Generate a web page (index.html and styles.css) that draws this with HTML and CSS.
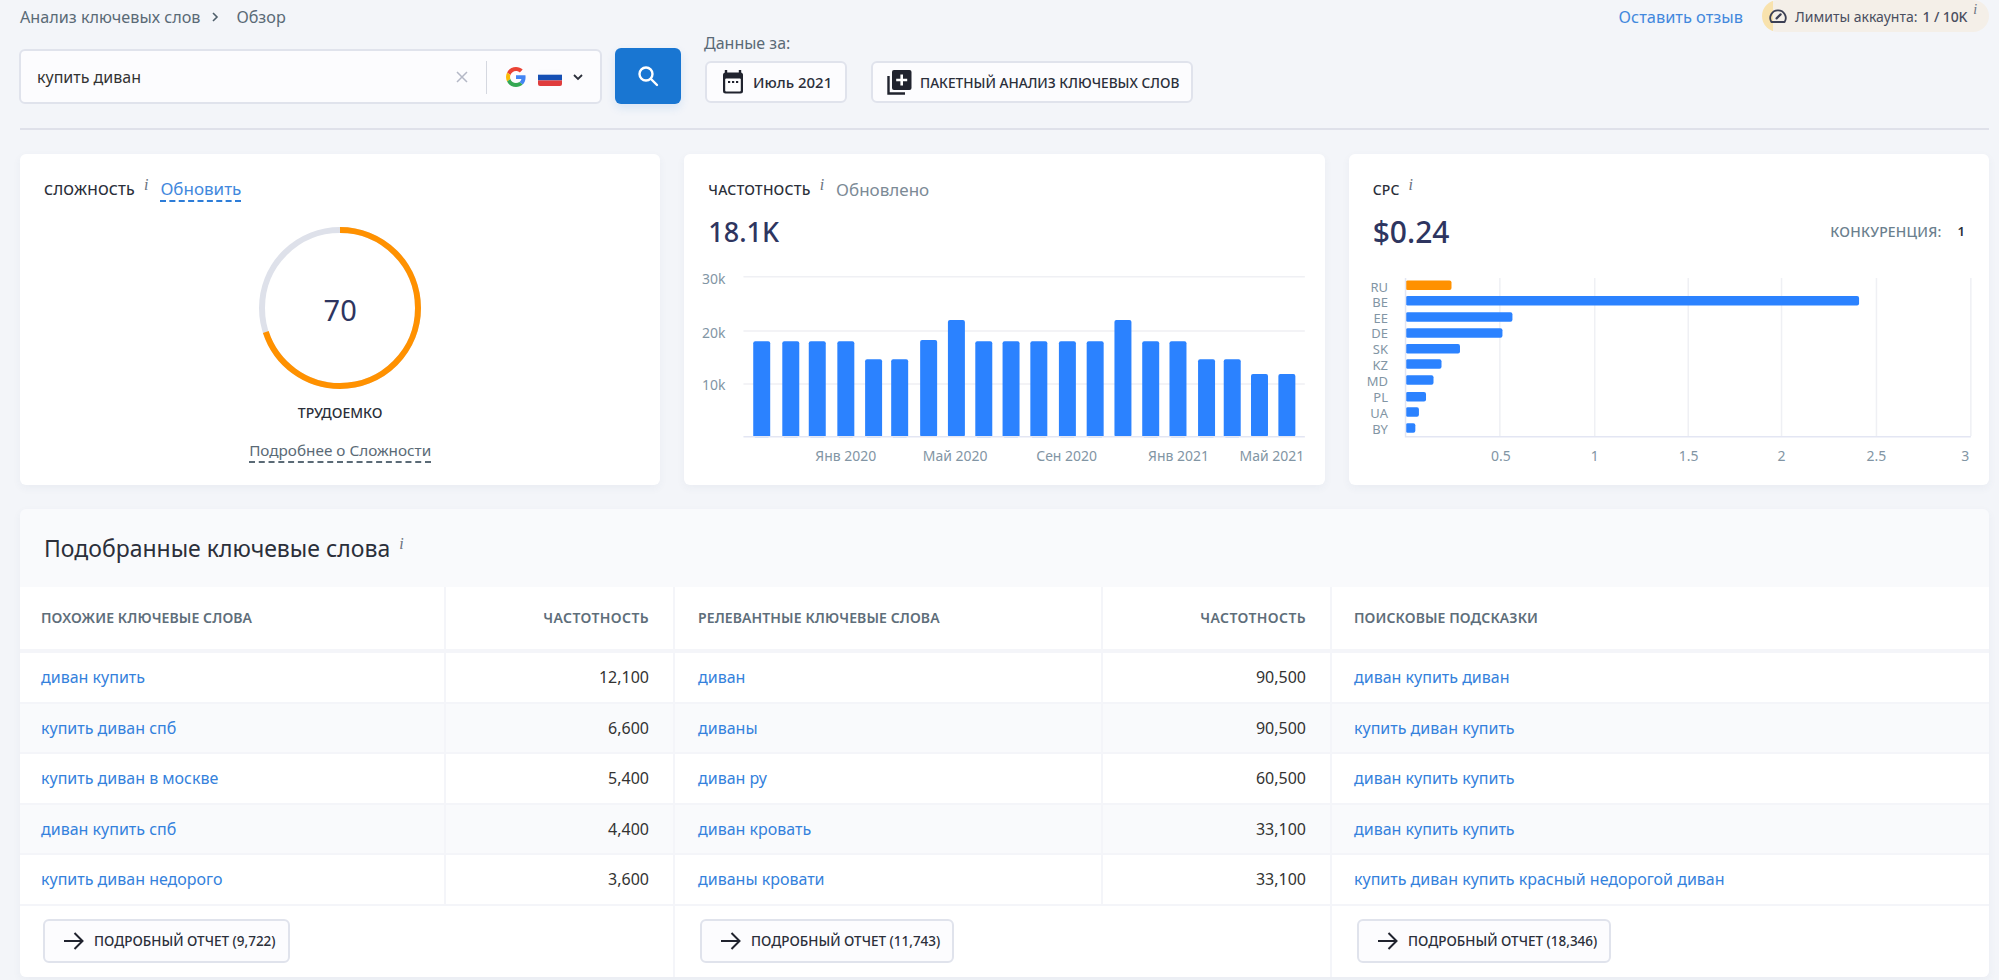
FILE: index.html
```html
<!DOCTYPE html>
<html lang="ru">
<head>
<meta charset="utf-8">
<title>Анализ ключевых слов</title>
<link rel="stylesheet" href="styles.css">
</head>
<body>
<header class="topbar">
  <nav class="crumbs">
    <span>Анализ ключевых слов</span>
    <svg class="crumb-sep" width="8" height="12" viewBox="0 0 8 12"><path d="M2 2l4 4-4 4" fill="none" stroke="#4f5f6b" stroke-width="1.6"/></svg>
    <span>Обзор</span>
  </nav>
  <div class="top-right">
    <a class="feedback">Оставить отзыв</a>
    <div class="limits">
      <svg width="18" height="16" viewBox="0 0 18 16"><path d="M2.4 14A7.6 7.6 0 0 1 9 2.4 7.6 7.6 0 0 1 15.600 14z" fill="none" stroke="#3c4054" stroke-width="1.800" stroke-linejoin="round"/><path d="M7.600 10.400l4-4" stroke="#3c4054" stroke-width="2.200" stroke-linecap="round"/></svg>
      <span class="limits-label">Лимиты аккаунта:</span>
      <span class="limits-value">1 / 10K</span>
      <i class="info">i</i>
    </div>
  </div>
</header>

<section class="toolbar">
  <div class="searchbox">
    <span class="query">купить диван</span>
    <svg class="clear" width="14" height="14" viewBox="0 0 14 14"><path d="M2 2l10 10M12 2L2 12" stroke="#b4b8c6" stroke-width="1.500"/></svg>
    <span class="vsep"></span>
    <svg class="g-logo" width="20" height="20" viewBox="0 0 48 48"><path fill="#EA4335" d="M24 9.500c3.540 0 6.710 1.220 9.210 3.600l6.850-6.850C35.900 2.380 30.470 0 24 0 14.620 0 6.510 5.380 2.560 13.220l7.980 6.190C12.430 13.720 17.740 9.500 24 9.500z"/><path fill="#4285F4" d="M46.980 24.550c0-1.570-.15-3.090-.38-4.550H24v9.020h12.940c-.58 2.960-2.260 5.480-4.780 7.180l7.730 6c4.510-4.180 7.090-10.360 7.090-17.650z"/><path fill="#FBBC05" d="M10.530 28.590c-.48-1.450-.76-2.990-.76-4.590s.27-3.140.76-4.590l-7.980-6.190C.92 16.460 0 20.120 0 24c0 3.880.92 7.540 2.560 10.780l7.970-6.190z"/><path fill="#34A853" d="M24 48c6.480 0 11.930-2.130 15.890-5.810l-7.730-6c-2.150 1.450-4.920 2.300-8.160 2.300-6.260 0-11.570-4.220-13.470-9.910l-7.980 6.190C6.510 42.620 14.620 48 24 48z"/></svg>
    <svg class="flag" width="24" height="17" viewBox="0 0 24 17"><defs><clipPath id="fc"><rect width="24" height="17" rx="2"/></clipPath></defs><g clip-path="url(#fc)"><rect width="24" height="5.700" fill="#fbfbfd"/><rect y="5.700" width="24" height="5.700" fill="#1650b4"/><rect y="11.400" width="24" height="5.600" fill="#e03c3c"/></g></svg>
    <svg class="chev" width="12" height="8" viewBox="0 0 12 8"><path d="M2 2l4 4 4-4" fill="none" stroke="#2b2f3a" stroke-width="1.800"/></svg>
  </div>
  <button class="search-btn" aria-label="Поиск">
    <svg width="26" height="26" viewBox="0 0 26 26"><circle cx="11" cy="11" r="6.500" fill="none" stroke="#fff" stroke-width="2.400"/><path d="M16 16l6 6" stroke="#fff" stroke-width="2.400" stroke-linecap="round"/></svg>
  </button>
  <div class="date-col">
    <span class="date-label">Данные за:</span>
    <button class="btn btn-date">
      <svg width="24" height="26" viewBox="0 0 24 26"><path d="M5 1v4M19 1v4" stroke="#20232e" stroke-width="2.400"/><rect x="2" y="3.500" width="20" height="21" rx="2.500" fill="#20232e"/><rect x="4.200" y="9.500" width="15.600" height="13" rx="1" fill="#fff"/><path d="M7 13h2.200M11 13h2.200M15 13h2.200" stroke="#20232e" stroke-width="2"/></svg>
      <span>Июль 2021</span>
    </button>
  </div>
  <button class="btn btn-batch">
    <svg width="25" height="26" viewBox="0 0 25 26"><path d="M1.500 7v17.500H18" fill="none" stroke="#20232e" stroke-width="2.400"/><rect x="5" y="1" width="19.500" height="20" rx="2" fill="#20232e"/><path d="M14.700 5.500v11M9.200 11h11" stroke="#fff" stroke-width="2.600"/></svg>
    <span>ПАКЕТНЫЙ АНАЛИЗ КЛЮЧЕВЫХ СЛОВ</span>
  </button>
</section>

<hr class="divider">

<section class="cards">
  <article class="card card-center">
    <div class="card-head">
      <h3 class="card-title">СЛОЖНОСТЬ</h3><i class="info">i</i>
      <a class="refresh">Обновить</a>
    </div>
    <div class="ring">
      <svg width="162" height="162" viewBox="0 0 162 162">
        <circle cx="81" cy="81" r="78" fill="none" stroke="#dee1ea" stroke-width="6"/>
        <circle cx="81" cy="81" r="78" fill="none" stroke="#ff9100" stroke-width="6" pathLength="100" stroke-dasharray="70 30" transform="rotate(-90 81 81)"/>
      </svg>
      <span class="ring-value">70</span>
    </div>
    <div class="ring-caption">ТРУДОЕМКО</div>
    <a class="more">Подробнее о Сложности</a>
  </article>

  <article class="card">
    <div class="card-head">
      <h3 class="card-title">ЧАСТОТНОСТЬ</h3><i class="info">i</i>
      <span class="updated">Обновлено</span>
    </div>
    <div class="value-row"><span class="big-value volume">18.1K</span></div>
    <svg class="chart" viewBox="0 0 641 200">
      <g class="grid-line">
        <path d="M59.500 8.700H621.500M59.500 63H621.500M59.500 116H621.500"/>
      </g>
      <g class="bar-blue">
        <rect x="69.300" y="73.300" width="17" height="96" rx="2"/>
        <rect x="98.400" y="73.300" width="17" height="96" rx="2"/>
        <rect x="124.900" y="73.300" width="17" height="96" rx="2"/>
        <rect x="153.500" y="73.300" width="17" height="96" rx="2"/>
        <rect x="181.300" y="91.300" width="17" height="78" rx="2"/>
        <rect x="207.400" y="91.300" width="17" height="78" rx="2"/>
        <rect x="236.400" y="72" width="17" height="97" rx="2"/>
        <rect x="264.200" y="52" width="17" height="117" rx="2"/>
        <rect x="291.600" y="73.300" width="17" height="96" rx="2"/>
        <rect x="318.900" y="73.300" width="17" height="96" rx="2"/>
        <rect x="346.700" y="73.300" width="17" height="96" rx="2"/>
        <rect x="375.300" y="73.300" width="17" height="96" rx="2"/>
        <rect x="403.100" y="73.300" width="17" height="96" rx="2"/>
        <rect x="430.900" y="52" width="17" height="117" rx="2"/>
        <rect x="458.700" y="73.300" width="17" height="96" rx="2"/>
        <rect x="486" y="73.300" width="17" height="96" rx="2"/>
        <rect x="514.600" y="91.300" width="17" height="78" rx="2"/>
        <rect x="540.300" y="91.300" width="17" height="78" rx="2"/>
        <rect x="567.600" y="106" width="17" height="63" rx="2"/>
        <rect x="595" y="106" width="17" height="63" rx="2"/>
      </g>
      <path class="axis" d="M59.500 168.700H621.500"/>
      <g class="tick tick-end">
        <text x="41.600" y="16">30k</text>
        <text x="41.600" y="70">20k</text>
        <text x="41.600" y="122">10k</text>
      </g>
      <g class="tick tick-mid">
        <text x="162" y="193">Янв 2020</text>
        <text x="271.500" y="193">Май 2020</text>
        <text x="383" y="193">Сен 2020</text>
        <text x="495" y="193">Янв 2021</text>
        <text x="588.500" y="193">Май 2021</text>
      </g>
    </svg>
  </article>

  <article class="card">
    <div class="card-head">
      <h3 class="card-title">CPC</h3><i class="info">i</i>
    </div>
    <div class="value-row">
      <span class="big-value price">$0.24</span>
      <span class="competition"><span class="comp-label">КОНКУРЕНЦИЯ:</span><b class="comp-value">1</b></span>
    </div>
    <svg class="chart" viewBox="0 0 641 200">
      <g class="grid-line">
        <path d="M151 10V168M246 10V168M339.600 10V168M433 10V168M528 10V168M622.500 10V168"/>
      </g>
      <rect class="bar-orange" x="56.600" y="12.300" width="46" height="9.500" rx="2"/>
      <g class="bar-blue">
        <rect x="56.600" y="28" width="454" height="9.500" rx="2"/>
        <rect x="56.600" y="44.300" width="107" height="9.500" rx="2"/>
        <rect x="56.600" y="60.300" width="97" height="9.500" rx="2"/>
        <rect x="56.600" y="76" width="54.500" height="9.500" rx="2"/>
        <rect x="56.600" y="91.300" width="36" height="9.500" rx="2"/>
        <rect x="56.600" y="107.300" width="28" height="9.500" rx="2"/>
        <rect x="56.600" y="124" width="20.500" height="9.500" rx="2"/>
        <rect x="56.600" y="139.300" width="13.400" height="9.500" rx="2"/>
        <rect x="56.600" y="155.300" width="9.800" height="9.500" rx="2"/>
      </g>
      <path class="axis" d="M56.600 10V168.700H622.500"/>
      <g class="tick tick-end tick-small">
        <text x="39" y="23.500">RU</text>
        <text x="39" y="38.500">BE</text>
        <text x="39" y="54.500">EE</text>
        <text x="39" y="70">DE</text>
        <text x="39" y="86">SK</text>
        <text x="39" y="102.500">KZ</text>
        <text x="39" y="118">MD</text>
        <text x="39" y="134">PL</text>
        <text x="39" y="150">UA</text>
        <text x="39" y="166">BY</text>
      </g>
      <g class="tick tick-mid">
        <text x="152" y="193">0.5</text>
        <text x="246" y="193">1</text>
        <text x="340" y="193">1.5</text>
        <text x="433" y="193">2</text>
        <text x="528" y="193">2.5</text>
        <text x="617" y="193">3</text>
      </g>
    </svg>
  </article>
</section>

<section class="keywords">
  <h2 class="kw-title">Подобранные ключевые слова<i class="info">i</i></h2>
  <div class="kw-grid">
    <div class="th">ПОХОЖИЕ КЛЮЧЕВЫЕ СЛОВА</div><div class="th num">ЧАСТОТНОСТЬ</div>
    <div class="th">РЕЛЕВАНТНЫЕ КЛЮЧЕВЫЕ СЛОВА</div><div class="th num">ЧАСТОТНОСТЬ</div>
    <div class="th">ПОИСКОВЫЕ ПОДСКАЗКИ</div>

    <div class="td"><a>диван купить</a></div><div class="td num">12,100</div>
    <div class="td"><a>диван</a></div><div class="td num">90,500</div>
    <div class="td"><a>диван купить диван</a></div>

    <div class="td alt"><a>купить диван спб</a></div><div class="td alt num">6,600</div>
    <div class="td alt"><a>диваны</a></div><div class="td alt num">90,500</div>
    <div class="td alt"><a>купить диван купить</a></div>

    <div class="td"><a>купить диван в москве</a></div><div class="td num">5,400</div>
    <div class="td"><a>диван ру</a></div><div class="td num">60,500</div>
    <div class="td"><a>диван купить купить</a></div>

    <div class="td alt"><a>диван купить спб</a></div><div class="td alt num">4,400</div>
    <div class="td alt"><a>диван кровать</a></div><div class="td alt num">33,100</div>
    <div class="td alt"><a>диван купить купить</a></div>

    <div class="td"><a>купить диван недорого</a></div><div class="td num">3,600</div>
    <div class="td"><a>диваны кровати</a></div><div class="td num">33,100</div>
    <div class="td"><a>купить диван купить красный недорогой диван</a></div>

    <div class="foot span2"><button class="btn btn-report"><svg width="21" height="20" viewBox="0 0 21 20"><path d="M1 10h18M11.500 2l8 8-8 8" fill="none" stroke="#20232e" stroke-width="2"/></svg><span>ПОДРОБНЫЙ ОТЧЕТ (9,722)</span></button></div>
    <div class="foot span2"><button class="btn btn-report"><svg width="21" height="20" viewBox="0 0 21 20"><path d="M1 10h18M11.500 2l8 8-8 8" fill="none" stroke="#20232e" stroke-width="2"/></svg><span>ПОДРОБНЫЙ ОТЧЕТ (11,743)</span></button></div>
    <div class="foot"><button class="btn btn-report"><svg width="21" height="20" viewBox="0 0 21 20"><path d="M1 10h18M11.500 2l8 8-8 8" fill="none" stroke="#20232e" stroke-width="2"/></svg><span>ПОДРОБНЫЙ ОТЧЕТ (18,346)</span></button></div>
  </div>
</section>
</body>
</html>
```
FILE: styles.css
```css
* { box-sizing: border-box; }
html, body { margin: 0; height: 980px; overflow: hidden; }
body {
  padding: 0 10px 0 20px;
  background: #f3f5f9;
  font-family: "Noto Sans", "Open Sans", sans-serif;
  font-size: 16px;
  color: #2b2f3a;
}
a { color: #3481dc; text-decoration: none; }
h2, h3 { margin: 0; font-weight: 400; }
.info {
  font: italic 16px "Liberation Serif", serif;
  color: #6a7280;
  align-self: flex-start;
}

.topbar { display: flex; justify-content: space-between; align-items: flex-start; height: 33px; }
.crumbs { display: flex; align-items: center; gap: 11px; height: 34px; color: #5a6a76; font-size: 16.200px; }
.crumb-sep { margin-right: 6px; }
.top-right { display: flex; align-items: center; gap: 19px; }
.feedback { font-size: 16.400px; color: #4288dd; }
.limits {
  display: flex; align-items: center; height: 32px; width: 227px; padding-left: 7px;
  border-radius: 16px;
  background: linear-gradient(90deg, #f8e2ad 11px, #f4efe8 11px);
  font-size: 14px; color: #4a4e60;
}
.limits-label { margin-left: 8px; }
.limits-value { margin-left: 5px; font-weight: 500; letter-spacing: -.1px; }
.limits .info { margin: 2px 0 0 6px; font-size: 14px; }

.toolbar { display: flex; align-items: flex-end; height: 71px; }
.searchbox {
  display: flex; align-items: center; width: 583px; height: 55px; margin: 0 0 0 -1px; padding: 1px 0 0 16px;
  background: #fcfcfe; border: 2px solid #e0e3ec; border-radius: 6px;
}
.query { flex: 1; font-size: 16px; color: #333; }
.clear { margin-right: 17px; }
.vsep { width: 1px; height: 33px; background: #d5d8e0; margin-right: 19px; }
.flag { margin-left: 12px; }
.chev { margin: 0 0 0 10px; }
.g-logo, .flag, .chev { flex: none; }
.searchbox .chev { margin-right: 16px; }
.search-btn {
  display: flex; align-items: center; justify-content: center;
  width: 66px; height: 56px; margin-left: 13px; padding: 0; border: 0; border-radius: 6px;
  background: #1976d2; box-shadow: 0 4px 10px rgba(25, 118, 210, .12);
}
.date-col { display: flex; flex-direction: column; align-items: flex-start; margin-left: 23px; margin-bottom: 1px; }
.date-label { margin-bottom: 8px; font-size: 16px; line-height: 20px; color: #5a6a76; }
.btn {
  display: flex; align-items: center;
  background: #fcfcfe; border: 2px solid #e0e3ec; border-radius: 6px;
  font-family: inherit; color: #2b2f3a; padding: 0;
}
.btn-date { width: 142px; height: 42px; margin-left: 1px; padding-left: 14px; gap: 8px; font-size: 15px; font-weight: 500; }
.btn-batch { width: 322px; height: 42px; margin: 0 0 1px 24px; padding-left: 14px; gap: 8px; font-size: 13.700px; font-weight: 500; }

.divider { height: 2px; margin: 24px 0 24px; border: 0; background: #dfe1ea; }

.cards { display: grid; grid-template-columns: repeat(3, 1fr); gap: 24px; }
.card {
  height: 331px; padding: 23px 24px 0; background: #fff; border-radius: 6px;
  box-shadow: 0 3px 8px rgba(60, 70, 110, .05);
}
.card-center { display: flex; flex-direction: column; align-items: center; }
.card-head { display: flex; align-items: center; align-self: stretch; height: 24px; }
.card-title { font-size: 14px; font-weight: 500; letter-spacing: .2px; color: #2b2f3a; }
.card-head .info { margin-left: 9px; margin-top: -1px; }
.refresh { margin-left: 12px; font-size: 17px; line-height: 22px; color: #4288dd; border-bottom: 2px dashed #2d7dd8; margin-top: 2px; }
.updated { margin-left: 12px; font-size: 17px; color: #7c8a96; }
.ring { position: relative; width: 162px; height: 162px; margin-top: 26px; }
.ring svg { display: block; }
.ring-value { position: absolute; inset: 2px 0 0; display: flex; align-items: center; justify-content: center; font-size: 29px; color: #2e3560; }
.ring-caption { margin-top: 14px; font-size: 14px; line-height: 20px; font-weight: 500; color: #2b2f3a; }
.more { margin-top: 16px; font-size: 15.300px; line-height: 22px; color: #5a6a76; border-bottom: 2px dashed #5a6a76; }

.value-row { display: flex; align-items: center; justify-content: space-between; height: 32px; margin-top: 14px; }
.big-value { font-weight: 500; color: #2e3560; }
.volume { font-size: 27px; }
.price { font-size: 30px; }
.competition { display: flex; align-items: center; }
.comp-label { font-size: 14px; font-weight: 500; color: #6b7f8e; letter-spacing: .2px; }
.comp-value { margin-left: 16px; font-size: 13px; font-weight: 600; color: #2b2f3a; }

.chart { display: block; width: calc(100% + 48px); height: 200px; margin: 21px -24px 0; overflow: visible; }
.grid-line path { fill: none; stroke: #eff0f4; stroke-width: 1.500; }
.axis { fill: none; stroke: #e3e6f3; stroke-width: 1.500; }
.bar-blue rect { fill: #2b82ff; }
.bar-orange { fill: #ff9100; }
.tick text { font-size: 14px; fill: #8295a4; }
.tick-end text { text-anchor: end; }
.tick-mid text { text-anchor: middle; }
.tick-small text { font-size: 13px; }

.keywords {
  margin-top: 24px; background: #f9fafc; border-radius: 6px;
  box-shadow: 0 3px 8px rgba(60, 70, 110, .05);
}
.kw-title { display: flex; align-items: center; height: 78px; padding-left: 24px; font-size: 23px; color: #2b2f3a; }
.kw-title .info { margin: 26px 0 0 9px; font-size: 16px; }
.kw-grid {
  display: grid;
  grid-template-columns: 424px 227px 426px 227px 1fr;
  grid-template-rows: 64px repeat(5, 48.500px) 71px;
  gap: 2px;
  background: #f4f5f9;
  border-radius: 0 0 6px 6px;
  overflow: hidden;
}
.th, .td { display: flex; align-items: center; background: #fff; padding: 0 24px 0 21px; }
.kw-grid > :nth-child(5n+3) { padding-left: 23px; }
.kw-grid > :nth-child(5n) { padding-left: 22px; }
.th { height: 62px; padding-bottom: 2px; font-size: 14px; font-weight: 600; color: #5e6e7a; letter-spacing: .1px; }
.th.num { letter-spacing: .4px; }
.td { font-size: 16px; color: #333; }
.alt { background: #f9fafc; }
.num { justify-content: flex-end; }
.foot { display: flex; align-items: center; padding-left: 23px; background: #fff; }
.span2 { grid-column: span 2; }
.kw-grid > .foot:nth-last-child(2) { padding-left: 25px; }
.kw-grid > .foot:last-child { padding-left: 25px; }
.btn-report { height: 44px; padding: 0 12px 0 18px; gap: 10px; font-size: 13.500px; font-weight: 500; }
```
